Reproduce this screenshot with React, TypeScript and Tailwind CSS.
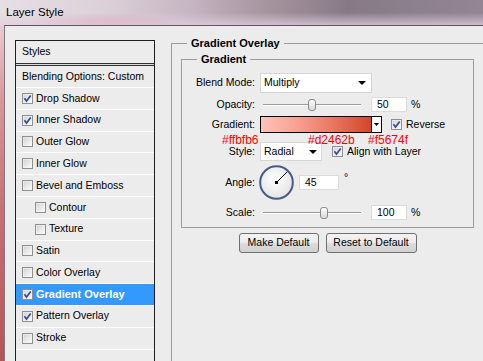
import React from "react";

const styleItems = [
  { label: "Drop Shadow", on: true },
  { label: "Inner Shadow", on: true },
  { label: "Outer Glow" },
  { label: "Inner Glow" },
  { label: "Bevel and Emboss" },
  { label: "Contour", sub: true },
  { label: "Texture", sub: true },
  { label: "Satin" },
  { label: "Color Overlay" },
  { label: "Gradient Overlay", on: true, active: true },
  { label: "Pattern Overlay", on: true },
  { label: "Stroke" },
];

const CheckBox = ({ on = false }: { on?: boolean }) => (
  <svg width="11" height="11" viewBox="0 0 11 11" className="shrink-0">
    <rect x="0.5" y="0.5" width="10" height="10" fill="#f6f6f6" stroke="#8e8f8f" />
    <rect x="1.5" y="1.5" width="8" height="8" fill="url(#cbFill)" />
    {on && (
      <path d="M2.4 5.3 L4.5 8 L8.7 2.4" fill="none" stroke="#3a4a9c" strokeWidth="1.7" />
    )}
  </svg>
);

const Arrow = ({ small = false }: { small?: boolean }) =>
  small ? (
    <svg width="5" height="3" viewBox="0 0 5 3">
      <path d="M0 0H5L2.5 3Z" fill="#000" />
    </svg>
  ) : (
    <svg width="8" height="4" viewBox="0 0 8 4">
      <path d="M0 0H8L4 4Z" fill="#000" />
    </svg>
  );

const Slider = ({ thumb }: { thumb: string }) => (
  <div className="relative w-[107px] h-[15px] flex items-center shrink-0">
    <div className="ml-[3px] w-[98px] h-[2px] border-t border-[#9c9c9c] bg-white" />
    <div
      className={`absolute top-[2px] h-[12px] w-[8px] rounded-[3px] border border-[#8a8a8a] bg-[linear-gradient(180deg,#fdfdfd,#d9d9d9)] ${thumb}`}
    />
  </div>
);

const Field = ({ value, w }: { value: string; w: string }) => (
  <div className={`h-[15px] ${w} bg-white border border-[#dcdcdc] pl-[5px] leading-[13px] shrink-0`}>
    {value}
  </div>
);

const Label = ({ children }: { children: React.ReactNode }) => (
  <div className="w-[73px] shrink-0 text-right">{children}</div>
);

export default function App() {
  return (
    <div className="relative w-[483px] h-[361px] overflow-hidden bg-[#ececec] font-['Liberation_Sans',Arial,sans-serif] text-[10.5px] text-black">
      <svg width="0" height="0" className="absolute">
        <defs>
          <linearGradient id="cbFill" x1="0" y1="0" x2="1" y2="1">
            <stop offset="0" stopColor="#d4d4d4" />
            <stop offset="1" stopColor="#fbfbfb" />
          </linearGradient>
          <radialGradient id="dialFill" cx="0.45" cy="0.4" r="0.6">
            <stop offset="0" stopColor="#ffffff" />
            <stop offset="1" stopColor="#e4e4e4" />
          </radialGradient>
        </defs>
      </svg>

      {/* title bar */}
      <div className="h-[25px] flex items-center pl-[6px] text-[11.5px] bg-[linear-gradient(180deg,rgba(255,255,255,0)_50%,rgba(226,204,222,0.75)_100%),radial-gradient(ellipse_80px_14px_at_105px_27px,rgba(215,110,128,0.55),rgba(215,110,128,0)),linear-gradient(90deg,#e6dfe5_0%,#dcd0d8_22%,#c5b4c1_40%,#a6959f_55%,#877a86_72%,#938594_100%)]">
        Layer Style
      </div>

      <div className="flex h-[336px]">
        <div className="w-[4px] shrink-0 bg-[linear-gradient(180deg,#eacbd0_0%,#d9969c_22%,#c96f74_55%,#b85459_100%)]" />

        <div className="flex-1 flex border-t border-l border-t-[#5c585c] border-l-[#7c787c] pl-[10px] pt-[11px]">
          {/* styles list */}
          <div className="mt-[3px] w-[140px] h-[360px] shrink-0 border border-[#1e1e1e]">
            <div className="h-[22px] flex items-center pl-[6px]">Styles</div>
            <div className="h-[3px] border-y border-[#333] bg-[#d8d8d8]" />
            <div className="h-[22px] flex items-center pl-[6px] border-b border-white">
              Blending Options: Custom
            </div>
            {styleItems.map((it) => (
              <div
                key={it.label}
                className={`h-[21.8px] flex items-center border-b border-white ${
                  it.sub ? "pl-[19px]" : "pl-[6px]"
                } ${it.active ? "bg-[#3399ff] text-white font-bold text-[11px]" : ""}`}
              >
                <CheckBox on={it.on} />
                <span className="ml-[3px]">{it.label}</span>
              </div>
            ))}
          </div>

          {/* settings */}
          <fieldset className="ml-[16px] w-[330px] h-[400px] shrink-0 border border-[#9c9c9c]">
            <legend className="ml-[15px] px-[4px] font-bold text-[11px] leading-[13px]">
              Gradient Overlay
            </legend>

            <fieldset className="ml-[9px] mt-[3px] w-[293px] border border-[#9c9c9c] pt-[7px] pb-[7px]">
              <legend className="ml-[15px] px-[4px] font-bold text-[11px] leading-[13px]">
                Gradient
              </legend>

              <div className="flex items-center h-[20px]">
                <Label>Blend Mode:</Label>
                <div className="ml-[5px] w-[112px] h-[20px] bg-white border border-[#d6d6d6] flex items-center justify-between pl-[3px] pr-[5px]">
                  <span>Multiply</span>
                  <Arrow />
                </div>
              </div>

              <div className="flex items-center h-[15px] mt-[4px]">
                <Label>Opacity:</Label>
                <div className="ml-[5px] flex items-center">
                  <Slider thumb="left-[48px]" />
                  <div className="ml-[4px]">
                    <Field value="50" w="w-[36px]" />
                  </div>
                  <span className="ml-[4px]">%</span>
                </div>
              </div>

              <div className="flex items-center h-[17px] mt-[4px]">
                <Label>Gradient:</Label>
                <div className="ml-[5px] w-[122px] h-[17px] border border-black flex">
                  <div className="flex-1 bg-[linear-gradient(90deg,#ffc2b9_0%,#f8a396_30%,#ec7a66_62%,#d2462b_100%)]" />
                  <div className="w-[10px] border-l border-black bg-white flex items-center justify-center">
                    <Arrow small />
                  </div>
                </div>
                <div className="ml-[9px] flex items-center">
                  <CheckBox on />
                </div>
                <span className="ml-[4px]">Reverse</span>
              </div>

              <div className="flex items-center h-[19px] mt-[9px]">
                <Label>Style:</Label>
                <div className="ml-[5px] w-[62px] h-[19px] bg-white border border-[#d6d6d6] flex items-center justify-between pl-[3px] pr-[4px]">
                  <span>Radial</span>
                  <Arrow />
                </div>
                <div className="ml-[10px] flex items-center">
                  <CheckBox on />
                </div>
                <span className="ml-[4px]">Align with Layer</span>
              </div>

              <div className="flex items-center h-[35px] mt-[4px]">
                <Label>Angle:</Label>
                <svg width="35" height="35" viewBox="0 0 35 35" className="ml-[4px] shrink-0">
                  <circle cx="17.5" cy="17.5" r="16.3" fill="url(#dialFill)" stroke="#4a5882" strokeWidth="2" />
                  <line x1="17.5" y1="17.5" x2="28.2" y2="6.8" stroke="#000" strokeWidth="1" />
                  <rect x="16" y="16" width="3" height="3" fill="#000" />
                </svg>
                <div className="ml-[5px]">
                  <Field value="45" w="w-[40px]" />
                </div>
                <span className="ml-[5px] mb-[9px]">°</span>
              </div>

              <div className="flex items-center h-[15px] mt-[5px]">
                <Label>Scale:</Label>
                <div className="ml-[5px] flex items-center">
                  <Slider thumb="left-[60px]" />
                  <div className="ml-[4px]">
                    <Field value="100" w="w-[36px]" />
                  </div>
                  <span className="ml-[4px]">%</span>
                </div>
              </div>
            </fieldset>

            <div className="ml-[9px] w-[293px] mt-[5px] flex justify-center gap-[7px]">
              <button className="w-[80px] h-[20px] rounded-[3px] border border-[#707070] bg-[linear-gradient(180deg,#f3f3f3_0%,#ebebeb_50%,#dddddd_51%,#d0d0d0_100%)] text-[10.5px]">
                Make Default
              </button>
              <button className="w-[91px] h-[20px] rounded-[3px] border border-[#707070] bg-[linear-gradient(180deg,#f3f3f3_0%,#ebebeb_50%,#dddddd_51%,#d0d0d0_100%)] text-[10.5px]">
                Reset to Default
              </button>
            </div>
          </fieldset>
        </div>
      </div>

      {/* colour annotations over the gradient row */}
      <span className="absolute left-[222px] top-[133px] text-[12px] leading-[14px] text-[#ff0000]">#ffbfb6</span>
      <span className="absolute left-[308px] top-[133px] text-[12px] leading-[14px] text-[#ff0000]">#d2462b</span>
      <span className="absolute left-[368px] top-[133px] text-[12px] leading-[14px] text-[#ff0000]">#f5674f</span>
    </div>
  );
}
